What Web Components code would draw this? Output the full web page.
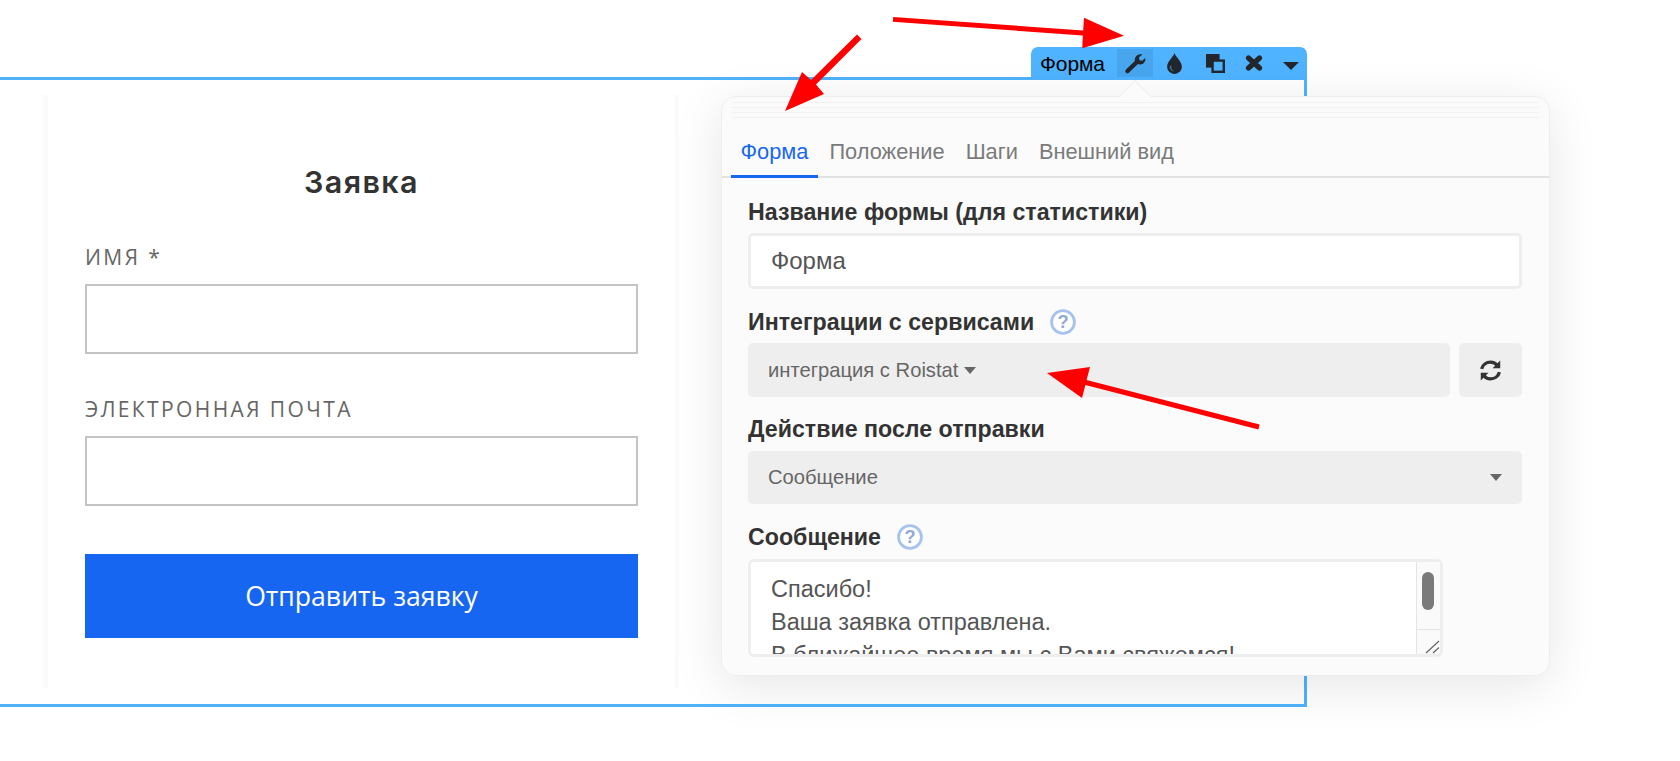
<!DOCTYPE html>
<html lang="ru">
<head>
<meta charset="utf-8">
<title>Форма</title>
<style>
  html, body { margin: 0; padding: 0; background: #fff; }
  body { font-family: "Liberation Sans", Arial, sans-serif; overflow: hidden; }
</style>
</head>
<body>
<editor-stage>
  <lead-form slot="form"></lead-form>
  <block-toolbar slot="overlay"></block-toolbar>
  <settings-panel slot="overlay"></settings-panel>
  <red-arrows slot="overlay"></red-arrows>
</editor-stage>

<script>
const helpIcon = `<svg width="28" height="28" viewBox="0 0 26 26"><circle cx="13" cy="13" r="10.6" fill="#fff" stroke="#a6c3ee" stroke-width="2.6"/><text x="13" y="19" text-anchor="middle" font-family="Liberation Sans, sans-serif" font-size="17" fill="#8fa9d3">?</text></svg>`;

function define(name, html) {
  customElements.define(name, class extends HTMLElement {
    constructor() {
      super();
      this.attachShadow({ mode: 'open' }).innerHTML = html;
    }
  });
}

define('editor-stage', `
<style>
  :host { display: block; position: relative; width: 1680px; height: 761px; }
  .frame {
    box-sizing: border-box;
    width: 1307px;
    height: 630px;
    margin-top: 77px;
    position: absolute;
    border: 3px solid #4fb3ff;
    border-left: 0;
    padding: 15px 0 16px 43px;
    display: flex;
  }
</style>
<div class="frame"><slot name="form"></slot></div>
<slot name="overlay"></slot>
`);

define('lead-form', `
<style>
  :host {
    display: flex;
    flex-direction: column;
    box-sizing: border-box;
    width: 636px;
    border-left: 5px solid #fafafa;
    border-right: 4px solid #fafafa;
    padding: 0 37px;
    font-family: "Open Sans", sans-serif;
  }
  h2 {
    margin: 70px 0 0;
    text-align: center;
    font: 600 30.500px/34px Inter, sans-serif;
    letter-spacing: 1.4px;
    color: #333;
  }
  label {
    display: block;
    font-size: 21px;
    line-height: 28px;
    letter-spacing: 2.4px;
    color: #666;
    text-transform: uppercase;
  }
  .first { margin-top: 44px; }
  .second { margin-top: 41px; }
  .box {
    box-sizing: border-box;
    height: 70px;
    border: 2px solid #c4c4c4;
    background: #fff;
  }
  .send {
    height: 84px;
    margin-top: 48px;
    background: #1766f2;
    color: #fff;
    font-size: 26.600px;
    display: flex;
    align-items: center;
    justify-content: center;
  }
</style>
<h2>Заявка</h2>
<label class="first">Имя *</label>
<div class="box" style="margin-top:13px"></div>
<label class="second">Электронная почта</label>
<div class="box" style="margin-top:13px"></div>
<div class="send">Отправить заявку</div>
`);

define('block-toolbar', `
<style>
  :host {
    position: absolute;
    left: 1031px;
    top: 47px;
    width: 276px;
    height: 33px;
    box-sizing: border-box;
    background: #4fb3ff;
    border-radius: 7px 7px 0 0;
    display: flex;
    align-items: flex-start;
    padding: 2px 0 0 9px;
    color: #000;
  }
  .name { font-size: 21px; line-height: 29px; width: 77px; letter-spacing: -.1px; }
  .btn { width: 36px; height: 28px; display: flex; align-items: center; justify-content: center; flex: none; }
  .btn.on { background: #47a6ee; }
  .tail { flex: 1; }
  svg { fill: #23272d; display: block; }
</style>
<span class="name">Форма</span>
<span class="btn on"><svg width="22" height="22" viewBox="0 0 22 22"><path d="M1.600 18.400 11 9.600c-.6-2.400.1-4.600 1.900-6.100 1.600-1.300 3.600-1.700 5.500-1L14.900 5.600l.6 2.600 2.600.6 3.200-2.800c.4 2.200-.3 4-1.800 5.300-1.700 1.300-3.600 1.500-5.600.8l-9.100 8.700c-.9.800-2 .8-2.800 0-.8-.8-.8-1.800 0-2.500z"/><path d="M3.400 18.800 12.500 10" stroke="#23272d" stroke-width="3.800" stroke-linecap="round" fill="none"/></svg></span>
<span class="btn" style="margin-left:3px"><svg width="17" height="23" viewBox="0 0 18 24"><path d="M9 1c1 4 7.800 9 7.800 14.300C16.800 19.700 13.300 23 9 23S1.200 19.700 1.200 15.300C1.200 10 8 5 9 1z"/><path d="M3.800 14.800c0 3.300 2.300 5.300 5 5.700-2.900-1.400-3.400-3.500-3.200-6.300z" fill="#4fb3ff" opacity=".55"/></svg></span>
<span class="btn" style="margin-left:5px"><svg width="19" height="19" viewBox="0 0 19 19" fill="none" stroke="#23272d" stroke-width="2.400"><rect x="1.200" y="1.200" width="11.200" height="11.200"/><rect x="6.600" y="6.600" width="11.200" height="11.200" fill="#4fb3ff"/></svg></span>
<span class="btn" style="margin-left:3px"><svg width="18" height="16" viewBox="0 0 18 16" fill="none" stroke="#23272d" stroke-width="5.200" stroke-linecap="round"><path d="M3.500 3 14.500 13M14.500 3 3.500 13"/></svg></span>
<span class="tail"></span>
<svg style="margin:13px 8px 0 0" width="16" height="8" viewBox="0 0 16 8"><path d="M0 0h16L8 8z"/></svg>
`);

define('settings-panel', `
<style>
  :host {
    position: absolute;
    left: 721px;
    top: 96px;
    width: 829px;
    height: 580px;
    box-sizing: border-box;
    background: #fbfbfb;
    border: 1px solid #eeeeee;
    border-radius: 15px;
    box-shadow: 0 10px 50px rgba(0,0,0,.1);
    color: #333;
    font-family: "Liberation Sans", Arial, sans-serif;
  }
  .beak {
    position: absolute;
    left: 401px;
    top: -12px;
    width: 23px;
    height: 23px;
    background: #fbfbfb;
    border: 1px solid #eee;
    border-width: 1px 0 0 1px;
    transform: rotate(45deg);
  }
  .grip {
    position: relative;
    height: 25px;
    margin: 0 10px;
    background: repeating-linear-gradient(#f1f1f1 0 1px, transparent 1px 5px) 0 5px / 100% 21px no-repeat;
  }
  .tabs {
    display: flex;
    height: 49px;
    margin-top: 5px;
    padding-left: 9px;
    border-bottom: 2px solid #e2e2e2;
    font-size: 21.800px;
    color: #7a7a7a;
  }
  .tab { padding: 12px 9.500px 0; margin-right: 2px; }
  .tab.on { color: #1766f2; position: relative; }
  .tab.on::after { content: ""; position: absolute; left: 0; right: 0; bottom: -2px; height: 3px; background: #1766f2; }
  .body { padding: 0 27px 0 26px; }
  .lbl { display: flex; align-items: center; font-size: 23.200px; font-weight: 700; line-height: 26px; color: #333; }
  .lbl svg { margin: -1px 0 -1px 15px; }
  .input {
    box-sizing: border-box;
    height: 56px;
    border: 3px solid #eee;
    border-radius: 5px;
    background: #fff;
    padding: 0 20px;
    font-size: 24px;
    line-height: 50px;
    color: #555;
  }
  .row { display: flex; gap: 9px; }
  .sel {
    flex: 1;
    height: 54px;
    background: #eee;
    border-radius: 5px;
    display: flex;
    align-items: center;
    padding: 0 20px 0 20px;
    font-size: 20.200px;
    color: #666;
    white-space: pre;
  }
  .caret { width: 0; height: 0; border: 6px solid transparent; border-top: 7px solid #666; border-bottom: 0; }
  .sp { flex: 1; }
  .sq { width: 63px; height: 54px; background: #eee; border-radius: 5px; display: flex; align-items: center; justify-content: center; }
  .area {
    box-sizing: border-box;
    position: relative;
    width: 695px;
    height: 98px;
    border: 3px solid #eee;
    border-radius: 6px;
    background: #fff;
    overflow: hidden;
    padding: 0 0 0 20px;
    font-size: 23.500px;
    line-height: 33px;
    color: #555;
    white-space: nowrap;
  }
  .area .text { padding-top: 11px; height: 92px; overflow: hidden; box-sizing: border-box; }
  .bar {
    position: absolute;
    right: 0;
    top: 0;
    bottom: 0;
    width: 23px;
    background: #fafafa;
    border-left: 1px solid #e4e4e4;
  }
  .thumb { position: absolute; left: 5px; top: 10px; width: 12px; height: 38px; border-radius: 6px; background: #7a7a7a; }
  .corner { position: absolute; left: 0; right: 0; bottom: 0; height: 24px; border-top: 1px solid #e4e4e4; }
  .corner svg { position: absolute; right: 0; bottom: 0; }
</style>
<div class="beak"></div>
<div class="grip"></div>
<div class="tabs">
  <div class="tab on">Форма</div>
  <div class="tab">Положение</div>
  <div class="tab">Шаги</div>
  <div class="tab">Внешний вид</div>
</div>
<div class="body">
  <div class="lbl" style="margin-top:21px">Название формы (для статистики)</div>
  <div class="input" style="margin-top:8px">Форма</div>
  <div class="lbl" style="margin-top:20px">Интеграции с сервисами ${helpIcon}</div>
  <div class="row" style="margin-top:8px">
    <div class="sel">интеграция с Roistat<span class="caret" style="margin-left:6px"></span></div>
    <div class="sq"><svg width="23" height="23" viewBox="0 0 22 22" fill="none" stroke="#333" stroke-width="3.200"><path d="M2.500 9.500C3.500 5.500 7 3 11 3c2.800 0 5 1.200 6.500 3.200"/><path d="M19.500 12.500C18.500 16.500 15 19 11 19c-2.800 0-5-1.200-6.500-3.200"/><path d="M20.300 1.500v7.300h-7.300zM1.700 20.500v-7.300H9z" fill="#333" stroke="none"/></svg></div>
  </div>
  <div class="lbl" style="margin-top:19px">Действие после отправки</div>
  <div class="row" style="margin-top:9px">
    <div class="sel" style="height:53px">Сообщение<span class="sp"></span><span class="caret"></span></div>
  </div>
  <div class="lbl" style="margin-top:20px">Сообщение ${helpIcon}</div>
  <div class="area" style="margin-top:9px">
    <div class="text">Спасибо!<br>Ваша заявка отправлена.<br>В ближайшее время мы с Вами свяжемся!</div>
    <div class="bar">
      <div class="thumb"></div>
      <div class="corner"><svg width="15" height="14" viewBox="0 0 15 14" stroke="#666" stroke-width="1.200"><path d="M1 13 14 1M8 13l6-5.500"/></svg></div>
    </div>
  </div>
</div>
`);

define('red-arrows', `
<style>
  :host { position: absolute; left: 0; top: 0; width: 1680px; height: 761px; pointer-events: none; }
  svg { display: block; }
</style>
<svg width="1680" height="761" viewBox="0 0 1680 761" fill="#ff0000" stroke="none">
  <path d="M893.200 16.900 892.800 21.800 1082.800 35.500 1082.300 48.300 1124 35.700 1084 17.700 1083.200 30.500z"/>
  <path d="M857 34.500 861.500 39 816 84.500 824 94 785 111 802 72 811 80z"/>
  <path d="M1259.600 424.600 1258.400 429.400 1085.400 384.900 1082 398 1047 373 1090 367 1086.600 380.100z"/>
</svg>
`);
</script>
</body>
</html>
